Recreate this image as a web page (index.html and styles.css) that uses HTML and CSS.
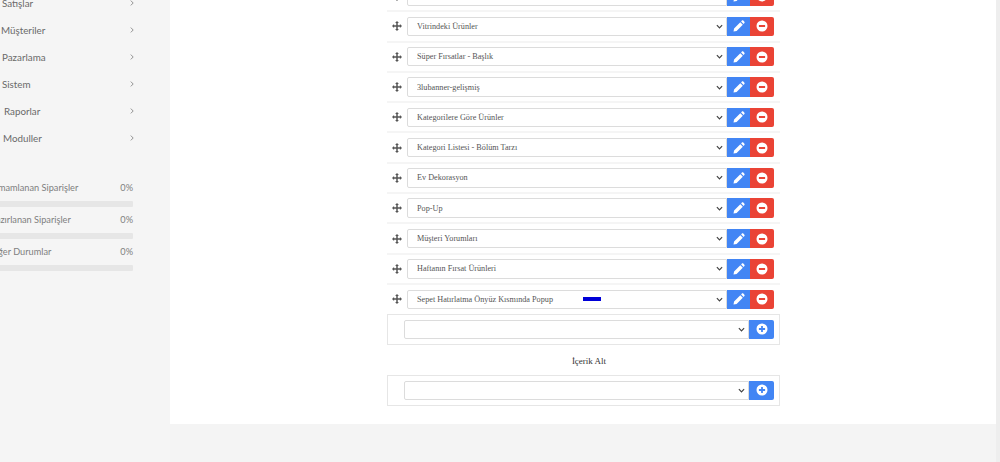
FILE: index.html
```html
<!DOCTYPE html>
<html lang="tr">
<head>
<meta charset="utf-8">
<title>Yerleşim</title>
<link rel="stylesheet" href="styles.css">
</head>
<body>
<svg class="defs" width="0" height="0" aria-hidden="true">
  <symbol id="i-move" viewBox="0 0 24 24"><path d="M12 0l4.6 5h-2.8v5.2H19V7.4L24 12l-5 4.6v-2.8h-5.2V19h2.8L12 24l-4.6-5h2.8v-5.2H5v2.8L0 12l5-4.6v2.8h5.2V5H7.4z"/></symbol>
  <symbol id="i-pencil" viewBox="0 0 24 24"><path d="M14.6 4.4l5 5L7.2 21.8 1 23l1.2-6.2zM16.2 2.8l1.6-1.6c.8-.8 2-.8 2.8 0l2.2 2.2c.8.8.8 2 0 2.8l-1.6 1.6z"/></symbol>
  <symbol id="i-minus" viewBox="0 0 24 24"><path fill-rule="evenodd" d="M12 1a11 11 0 1 1 0 22 11 11 0 0 1 0-22zM5.8 10v4h12.4v-4z"/></symbol>
  <symbol id="i-plus" viewBox="0 0 24 24"><path fill-rule="evenodd" d="M12 1a11 11 0 1 1 0 22 11 11 0 0 1 0-22zM10.2 5.8v4.4H5.8v3.6h4.4v4.4h3.6v-4.4h4.4v-3.6h-4.4V5.8z"/></symbol>
  <symbol id="i-chev" viewBox="0 0 6 10"><path d="M1 1l4 4-4 4" fill="none" stroke="currentColor" stroke-width="1.3"/></symbol>
</svg>
<div class="page">
  <aside class="side">
    <ul class="menu">
      <li class="menu-item"><span class="lbl off-2">Satışlar</span><svg class="chev"><use href="#i-chev"/></svg></li>
      <li class="menu-item"><span class="lbl off-1">Müşteriler</span><svg class="chev"><use href="#i-chev"/></svg></li>
      <li class="menu-item"><span class="lbl off-2">Pazarlama</span><svg class="chev"><use href="#i-chev"/></svg></li>
      <li class="menu-item"><span class="lbl off-2">Sistem</span><svg class="chev"><use href="#i-chev"/></svg></li>
      <li class="menu-item"><span class="lbl off-4">Raporlar</span><svg class="chev"><use href="#i-chev"/></svg></li>
      <li class="menu-item"><span class="lbl off-3">Moduller</span><svg class="chev"><use href="#i-chev"/></svg></li>
    </ul>
    <div class="stats">
      <div class="stat"><div class="stat-head"><span>Tamamlanan Siparişler</span><span>0%</span></div><div class="bar"></div></div>
      <div class="stat"><div class="stat-head"><span>Hazırlanan Siparişler</span><span>0%</span></div><div class="bar"></div></div>
      <div class="stat"><div class="stat-head"><span>Diğer Durumlar</span><span>0%</span></div><div class="bar"></div></div>
    </div>
  </aside>
  <main class="panel">
    <div class="layout">
      <div class="row"><svg class="move"><use href="#i-move"/></svg><select class="sel"><option>Slider</option></select><button class="btn edit"><svg><use href="#i-pencil"/></svg></button><button class="btn del"><svg><use href="#i-minus"/></svg></button></div>
      <div class="row"><svg class="move"><use href="#i-move"/></svg><select class="sel"><option>Vitrindeki Ürünler</option></select><button class="btn edit"><svg><use href="#i-pencil"/></svg></button><button class="btn del"><svg><use href="#i-minus"/></svg></button></div>
      <div class="row"><svg class="move"><use href="#i-move"/></svg><select class="sel"><option>Süper Fırsatlar - Başlık</option></select><button class="btn edit"><svg><use href="#i-pencil"/></svg></button><button class="btn del"><svg><use href="#i-minus"/></svg></button></div>
      <div class="row"><svg class="move"><use href="#i-move"/></svg><select class="sel"><option>3lubanner-gelişmiş</option></select><button class="btn edit"><svg><use href="#i-pencil"/></svg></button><button class="btn del"><svg><use href="#i-minus"/></svg></button></div>
      <div class="row"><svg class="move"><use href="#i-move"/></svg><select class="sel"><option>Kategorilere Göre Ürünler</option></select><button class="btn edit"><svg><use href="#i-pencil"/></svg></button><button class="btn del"><svg><use href="#i-minus"/></svg></button></div>
      <div class="row"><svg class="move"><use href="#i-move"/></svg><select class="sel"><option>Kategori Listesi - Bölüm Tarzı</option></select><button class="btn edit"><svg><use href="#i-pencil"/></svg></button><button class="btn del"><svg><use href="#i-minus"/></svg></button></div>
      <div class="row"><svg class="move"><use href="#i-move"/></svg><select class="sel"><option>Ev Dekorasyon</option></select><button class="btn edit"><svg><use href="#i-pencil"/></svg></button><button class="btn del"><svg><use href="#i-minus"/></svg></button></div>
      <div class="row"><svg class="move"><use href="#i-move"/></svg><select class="sel"><option>Pop-Up</option></select><button class="btn edit"><svg><use href="#i-pencil"/></svg></button><button class="btn del"><svg><use href="#i-minus"/></svg></button></div>
      <div class="row"><svg class="move"><use href="#i-move"/></svg><select class="sel"><option>Müşteri Yorumları</option></select><button class="btn edit"><svg><use href="#i-pencil"/></svg></button><button class="btn del"><svg><use href="#i-minus"/></svg></button></div>
      <div class="row"><svg class="move"><use href="#i-move"/></svg><select class="sel"><option>Haftanın Fırsat Ürünleri</option></select><button class="btn edit"><svg><use href="#i-pencil"/></svg></button><button class="btn del"><svg><use href="#i-minus"/></svg></button></div>
      <div class="row last"><svg class="move"><use href="#i-move"/></svg><div class="sel-wrap"><select class="sel"><option>Sepet Hatırlatma Önyüz Kısmında Popup</option></select><span class="mark"></span></div><button class="btn edit"><svg><use href="#i-pencil"/></svg></button><button class="btn del"><svg><use href="#i-minus"/></svg></button></div>
      <div class="add-box"><select class="sel"><option></option></select><button class="btn add"><svg><use href="#i-plus"/></svg></button></div>
      <div class="pos-title">İçerik Alt</div>
      <div class="add-box"><select class="sel"><option></option></select><button class="btn add"><svg><use href="#i-plus"/></svg></button></div>
    </div>
  </main>
  <div class="edge"></div>
</div>
</body>
</html>
```
FILE: styles.css
```css
* { box-sizing: border-box; }
html, body { margin: 0; height: 462px; overflow: hidden; background: #f4f4f4; }
.defs { position: absolute; }
.page { display: flex; align-items: flex-start; height: 462px; }

.side { width: 170px; flex: none; overflow: hidden; font-family: Lato, "Noto Sans", sans-serif; color: #6a6a6a; background: #f5f5f5; }
.menu { list-style: none; margin: -11px 0 0; padding: 0 36px 0 0; }
.menu-item { display: flex; justify-content: space-between; align-items: center; height: 27px; font-size: 9.8px; }
.chev { width: 4px; height: 6px; flex: none; color: #777; }
.off-1 { margin-left: 1px; }
.off-2 { margin-left: 2px; }
.off-3 { margin-left: 3px; }
.off-4 { margin-left: 4px; }
.stats { margin: 30px 37px 0 -11px; padding-bottom: 200px; }
.stat { height: 32px; }
.stat-head { display: flex; justify-content: space-between; font-size: 9.2px; line-height: 13px; height: 20px; color: #808080; }
.bar { height: 6px; background: #e6e6e6; border-radius: 1px; }

.panel { width: 826px; height: 424px; flex: none; background: #fff; overflow: hidden; }
.edge { width: 4px; height: 462px; flex: none; background: #eeeeee; }
.layout { width: 393px; margin: -18px 0 0 217px; font-family: "Liberation Serif", serif; }

.row { display: flex; align-items: center; height: 30.3px; padding: 0 6px 0 0; border-bottom: 2px solid #f5f5f5; }
.row.last { border-bottom: 0; height: 29px; }
.move { width: 10px; height: 10px; flex: none; margin: 0 5px 0 5px; fill: #555; }
.sel, .sel-wrap { flex: 1; min-width: 0; height: 19.5px; }
.sel-wrap { position: relative; display: flex; }
.sel {
  appearance: none;
  padding: 0 14px 0 9px;
  font-family: "Liberation Serif", serif;
  font-size: 8.2px;
  color: #555;
  background: #fff url("data:image/svg+xml,%3Csvg xmlns='http://www.w3.org/2000/svg' viewBox='0 0 8 5'%3E%3Cpath d='M1 1l3 3 3-3' fill='none' stroke='%23444' stroke-width='1.4'/%3E%3C/svg%3E") no-repeat right 3px center / 7px 5px;
  border: 1px solid #dcdcdc;
  border-radius: 2px 0 0 2px;
}
.mark { position: absolute; left: 176px; top: 7px; width: 18px; height: 4px; background: #0000d8; }
.btn { display: flex; align-items: center; justify-content: center; width: 24px; height: 19.5px; flex: none; padding: 0; border: 0; color: #fff; cursor: pointer; }
.btn svg { width: 12px; height: 12px; fill: #fff; }
.edit { width: 23px; background: #4285f4; }
.del { background: #ea4335; border-radius: 0 2px 2px 0; }
.add { width: 25px; background: #4285f4; border-radius: 0 2px 2px 0; }
.add-box { display: flex; align-items: center; height: 31px; padding: 0 5px 0 16px; border: 1px solid #e6e6e6; }
.pos-title { height: 30px; padding-left: 11px; font-size: 9px; line-height: 32px; text-align: center; color: #333; }
```
